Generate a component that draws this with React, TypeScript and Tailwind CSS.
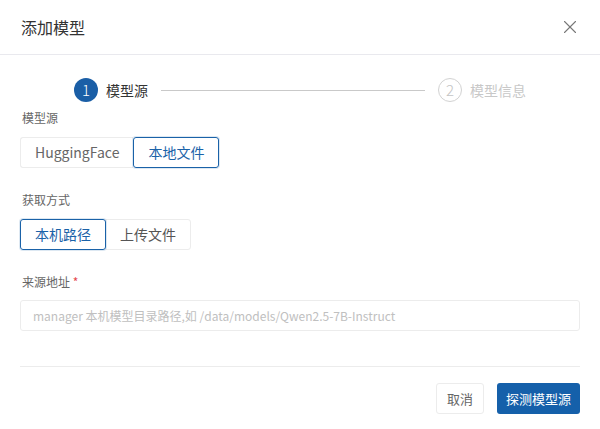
import { X } from 'lucide-react';

const font = { fontFamily: '"Noto Sans CJK SC", "Noto Sans", sans-serif' };

function SegButton({ label, active, first }: { label: string; active?: boolean; first?: boolean }) {
  return (
    <button
      type="button"
      className={
        active
          ? 'relative z-10 h-[31px] rounded-[3px] border border-[#1a62a8] px-[14px] text-[14px] text-[#1a62a8] shadow-[0_0_0_1px_rgba(26,98,168,0.15)]'
          : first
            ? 'h-[31px] rounded-l-[3px] border border-r-0 border-[#ececec] px-[14px] text-[14px] text-[#666]'
            : '-ml-px h-[31px] rounded-r-[3px] border border-[#ececec] px-[14px] text-[14px] text-[#555]'
      }
    >
      {label}
    </button>
  );
}

export default function App() {
  return (
    <div style={font} className="h-[429px] w-[600px] overflow-hidden rounded-[4px] bg-white">
      <div className="flex h-[55px] items-center justify-between border-b border-[#e9e9ee] pl-[21px] pr-[19px]">
        <span className="text-[16px] text-[#333]">添加模型</span>
        <X className="h-[22px] w-[22px] text-[#777]" strokeWidth={1.2} />
      </div>

      <div className="px-5">
        <div className="mt-[23px] flex h-6 items-center justify-center">
          <div className="flex h-6 w-6 items-center justify-center rounded-full bg-[#1a5ea6] text-[15px] font-light text-white">1</div>
          <span className="ml-2 text-[14px] text-[#333]">模型源</span>
          <div className="mx-[13px] h-px w-[264px] bg-[#c9c9c9]" />
          <div className="flex h-6 w-6 items-center justify-center rounded-full border border-[#d2d2d2] text-[15px] font-light text-[#c4c4c4]">2</div>
          <span className="ml-2 text-[14px] text-[#c8c8c8]">模型信息</span>
        </div>

        <div className="mt-[7px] h-[18px] pl-[2px] text-[12px] leading-[18px] text-[#666]">模型源</div>
        <div className="mt-[10px] flex">
          <SegButton label="HuggingFace" first />
          <SegButton label="本地文件" active />
        </div>

        <div className="mt-[23px] h-[18px] pl-[2px] text-[12px] leading-[18px] text-[#666]">获取方式</div>
        <div className="mt-[10px] flex">
          <SegButton label="本机路径" active />
          <SegButton label="上传文件" />
        </div>

        <div className="mt-[23px] h-[18px] pl-[2px] text-[12px] leading-[18px] text-[#666]">
          来源地址 <span className="text-[#e5484d]">*</span>
        </div>
        <input
          readOnly
          placeholder="manager 本机模型目录路径,如 /data/models/Qwen2.5-7B-Instruct"
          className="mt-[9px] h-[31px] w-full rounded-[3px] border border-[#ececec] px-[12px] text-[12px] outline-none placeholder:text-[#c0c0c0]"
        />

        <div className="mt-[35px] h-px bg-[#ececec]" />

        <div className="mt-4 flex justify-end gap-[13px]">
          <button type="button" className="h-[31px] rounded-[3px] border border-[#ececec] px-[10px] text-[13px] text-[#666]">
            取消
          </button>
          <button type="button" className="h-[31px] rounded-[3px] bg-[#1560aa] px-[9px] text-[13px] text-white">
            探测模型源
          </button>
        </div>
      </div>
    </div>
  );
}
